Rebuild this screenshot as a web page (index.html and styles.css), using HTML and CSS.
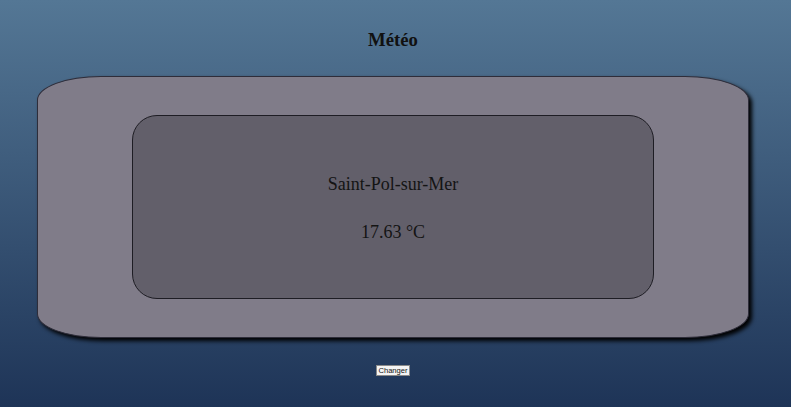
FILE: index.html
```html
<!DOCTYPE html>
<html lang="fr">
<head>
<meta charset="utf-8">
<title>Météo</title>
<link rel="stylesheet" href="styles.css">
</head>
<body>
<main class="page">
  <h1 class="title">Météo</h1>
  <section class="card">
    <div class="panel">
      <p class="city">Saint-Pol-sur-Mer</p>
      <p class="temp">17.63 °C</p>
    </div>
  </section>
  <button class="change" type="button">Changer</button>
</main>
</body>
</html>
```
FILE: styles.css
```css
html, body {
  margin: 0;
  height: 100%;
}
body {
  background: linear-gradient(to bottom, #547795 0%, #1e3457 100%);
  font-family: "Liberation Serif", "Times New Roman", serif;
  color: #111;
}
.page {
  width: 786px;
  display: flex;
  flex-direction: column;
  align-items: center;
}
.title {
  margin: 0;
  padding-top: 29px;
  font-size: 18.72px;
  line-height: 22px;
  font-weight: bold;
}
.card {
  box-sizing: border-box;
  margin-top: 25px;
  width: 712px;
  height: 262px;
  background: #807c89;
  border: 1px solid #2e2d3a;
  border-radius: 64px / 24px;
  box-shadow: 3px 3px 4px #000;
  display: flex;
  align-items: center;
  justify-content: center;
}
.panel {
  box-sizing: border-box;
  width: 522px;
  height: 184px;
  margin-top: -1px;
  padding-top: 4px;
  background: #625f6a;
  border: 1px solid #1e1d24;
  border-radius: 25px;
  display: flex;
  flex-direction: column;
  align-items: center;
  justify-content: center;
  gap: 27px;
}
.city, .temp {
  margin: 0;
  font-size: 18px;
  line-height: 21px;
  color: #141414;
}
.change {
  margin-top: 27px;
  font-family: "Liberation Sans", Arial, sans-serif;
  font-size: 7.6px;
  line-height: 9px;
  padding: 0 1px;
  background: #f4f4f4;
  color: #111;
  border: 1px solid #8a8a8a;
  border-radius: 0;
}
```
